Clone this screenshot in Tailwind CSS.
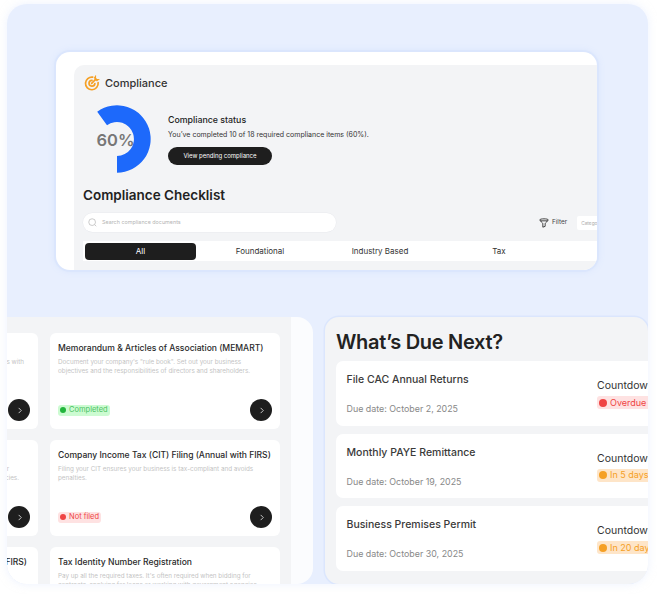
<!DOCTYPE html>
<html lang="en">
<head>
    <meta charset="UTF-8">
    <meta name="viewport" content="width=device-width, initial-scale=1.0">
    <title>Compliance</title>
    <script src="https://cdn.jsdelivr.net/npm/@tailwindcss/browser@4"></script>
</head>
<body class="bg-white [font-family:Inter,sans-serif] overflow-hidden">
    <div class="w-[657px] h-[596px] pt-[4px] pl-[7px]">
        <div class="w-[641px] h-[580px] rounded-[20px] overflow-hidden bg-[#e8effe] flex flex-col shadow-[0_0_8px_rgba(219,230,253,0.5)]">

            <!-- Top preview -->
            <div class="ml-[49px] mt-[48px] w-[541px] h-[218px] shrink-0 rounded-[14px] bg-white pt-[13px] pl-[18px] shadow-[0_0_0_2px_#dbe6fd,0_0_6px_2px_#dbe6fd] overflow-hidden">
                <div class="h-full rounded-tl-[10px] bg-[#f3f4f6] pl-[9px] pt-[8px] text-[#222]">
                    <div class="flex items-center gap-[5px] h-[20px] pl-[1px]">
                        <svg class="w-[16px] h-[16px]" viewBox="0 0 24 24" fill="none" stroke="#f5a025" stroke-width="2.6" stroke-linecap="round">
                            <path d="M13 3.2A9.5 9.5 0 1 0 21.2 11.5"/>
                            <path d="M12 8a4.4 4.4 0 1 0 4.3 5"/>
                            <path d="M11.5 12.5 18 6"/>
                            <path d="M16 4.5 17 3v4h4l-1.6 1.2" stroke-width="2.2"/>
                        </svg>
                        <span class="text-[11px] font-medium text-[#333]">Compliance</span>
                    </div>
                    <div class="flex items-center mt-[12px] h-[68px]">
                        <div class="relative w-[68px] h-[68px] shrink-0">
                            <svg class="w-[68px] h-[68px]" viewBox="0 0 68 68">
                                <path d="M34 67.7A33.7 33.7 0 1 0 14.2 6.7L24 20.2A17 17 0 1 1 34 51Z" fill="#1d69fb"/>
                            </svg>
                            <span class="absolute left-[13.5px] top-[24px] text-[16.5px] leading-[22px] font-semibold text-[#777]">60%</span>
                        </div>
                        <div class="ml-[17px]">
                            <p class="text-[8.8px] leading-[11px] font-medium">Compliance status</p>
                            <p class="text-[7px] leading-[9px] mt-[5px] whitespace-nowrap text-[#333]">You’ve completed 10 of 18 required compliance items (60%).</p>
                            <div class="mt-[8px] w-[104px] h-[18px] rounded-full bg-[#1e1e1e] text-white text-[6px] flex items-center justify-center">View pending compliance</div>
                        </div>
                    </div>
                    <h2 class="text-[13.5px] leading-[18px] font-semibold mt-[13px]">Compliance Checklist</h2>
                    <div class="flex items-center mt-[9px] h-[19px]">
                        <div class="w-[253px] h-[19px] shrink-0 rounded-full bg-white flex items-center pl-[5px] gap-[5px] shadow-[0_0_0_0.5px_#e9eaee]">
                            <svg class="w-[9px] h-[9px]" viewBox="0 0 12 12" fill="none" stroke="#aaa" stroke-width="0.8"><circle cx="5.5" cy="5.5" r="4.5"/><path d="m9 9 2 2"/></svg>
                            <span class="text-[5.4px] text-[#b5b5b5]">Search compliance documents</span>
                        </div>
                        <svg class="ml-[203px] w-[10px] h-[10px] shrink-0" viewBox="0 0 12 12" fill="none" stroke="#222" stroke-width="1"><path d="M1 2.2c0-1.6 10-1.6 10 0 0 1.4-3.4 3.3-3.6 4.6V10l-2.8 1V6.8C4.4 5.5 1 3.6 1 2.2Z"/><path d="M1.5 3.4h9"/></svg>
                        <span class="ml-[3px] text-[6.4px] text-[#444]">Filter</span>
                        <div class="ml-[10px] w-[30px] h-[14px] shrink-0 bg-white rounded-l-[2px] text-[4.8px] text-[#aaa] pl-[4px] leading-[14px] overflow-hidden">Category</div>
                    </div>
                    <div class="flex items-center mt-[9px] h-[20px] bg-white pl-[2px] text-[8px] text-[#333]">
                        <div class="w-[111px] h-[17px] rounded-[4px] bg-[#1e1e1e] text-white flex items-center justify-center">All</div>
                        <div class="w-[128px] text-center">Foundational</div>
                        <div class="w-[112px] text-center">Industry Based</div>
                        <div class="w-[126px] text-center">Tax</div>
                    </div>
                </div>
            </div>

            <!-- Bottom cards -->
            <div class="mt-[47px] flex gap-[12px] h-[267px] shrink-0">
                <div class="w-[306px] h-full shrink-0 rounded-tr-[16px] rounded-br-[16px] rounded-bl-[20px] bg-[#fbfcfe] overflow-hidden">
                    <div class="w-[284px] h-full bg-[#f3f4f6] overflow-hidden">
                        <div class="-ml-[199px] pt-[16px] grid grid-cols-[230px_230px] gap-x-[12px] gap-y-[11px] w-[472px]">

                            <div class="h-[96px] rounded-[6px] bg-white pt-[10px] px-[8px] flex flex-col">
                                <p class="h-[11px]"></p>
                                <p class="mt-[4px] text-[6.3px] leading-[9.3px] text-[#c4c4c4] text-right pr-[6px]">s with</p>
                                <div class="mt-auto mb-[8px] flex justify-end"><div class="w-[22px] h-[22px] rounded-full bg-[#1e1e1e] flex items-center justify-center"><svg class="w-[7px] h-[7px]" viewBox="0 0 8 8" fill="none" stroke="#ddd" stroke-width="1"><path d="m3 1 3 3-3 3"/></svg></div></div>
                            </div>
                            <div class="h-[96px] rounded-[6px] bg-white pt-[10px] px-[8px] flex flex-col">
                                <h3 class="text-[8.55px] leading-[11px] font-medium text-[#2a2a2a] whitespace-nowrap">Memorandum &amp; Articles of Association (MEMART)</h3>
                                <p class="mt-[4px] text-[6.3px] leading-[9.3px] text-[#c4c4c4]">Document your company's "rule book". Set out your business<br>objectives and the responsibilities of directors and shareholders.</p>
                                <div class="mt-auto mb-[8px] flex items-center justify-between">
                                    <div class="h-[11px] rounded-[3px] bg-[#ccfbd1] px-[2px] flex items-center gap-[3px] text-[7.5px] text-[#4cc264]"><span class="w-[6px] h-[6px] rounded-full bg-[#22b53c]"></span>Completed</div>
                                    <div class="w-[22px] h-[22px] rounded-full bg-[#1e1e1e] flex items-center justify-center"><svg class="w-[7px] h-[7px]" viewBox="0 0 8 8" fill="none" stroke="#ddd" stroke-width="1"><path d="m3 1 3 3-3 3"/></svg></div>
                                </div>
                            </div>

                            <div class="h-[96px] rounded-[6px] bg-white pt-[10px] px-[8px] flex flex-col">
                                <p class="h-[11px]"></p>
                                <p class="mt-[4px] text-[6.3px] leading-[9.3px] text-[#c4c4c4] text-right pr-[21px]">r</p>
                                <p class="text-[6.3px] leading-[9.3px] text-[#c4c4c4] text-right pr-[11px]">cies.</p>
                                <div class="mt-auto mb-[8px] flex justify-end"><div class="w-[22px] h-[22px] rounded-full bg-[#1e1e1e] flex items-center justify-center"><svg class="w-[7px] h-[7px]" viewBox="0 0 8 8" fill="none" stroke="#ddd" stroke-width="1"><path d="m3 1 3 3-3 3"/></svg></div></div>
                            </div>
                            <div class="h-[96px] rounded-[6px] bg-white pt-[10px] px-[8px] flex flex-col">
                                <h3 class="text-[8.55px] leading-[11px] font-medium text-[#2a2a2a] whitespace-nowrap">Company Income Tax (CIT) Filing (Annual with FIRS)</h3>
                                <p class="mt-[4px] text-[6.3px] leading-[9.3px] text-[#c4c4c4]">Filing your CIT ensures your business is tax-compliant and avoids<br>penalties.</p>
                                <div class="mt-auto mb-[8px] flex items-center justify-between">
                                    <div class="h-[11px] rounded-[3px] bg-[#fee2e2] px-[2px] flex items-center gap-[3px] text-[7.5px] text-[#ef4444]"><span class="w-[6px] h-[6px] rounded-full bg-[#ef4444]"></span>Not filed</div>
                                    <div class="w-[22px] h-[22px] rounded-full bg-[#1e1e1e] flex items-center justify-center"><svg class="w-[7px] h-[7px]" viewBox="0 0 8 8" fill="none" stroke="#ddd" stroke-width="1"><path d="m3 1 3 3-3 3"/></svg></div>
                                </div>
                            </div>

                            <div class="h-[96px] rounded-[6px] bg-white pt-[10px] px-[8px] flex flex-col">
                                <p class="text-[8.55px] leading-[11px] font-medium text-[#2a2a2a] text-right pr-[3px]">(FIRS)</p>
                                <p class="mt-[4px] text-[6.3px] leading-[9.3px] text-[#c4c4c4] text-right pr-[24px]">s</p>
                            </div>
                            <div class="h-[96px] rounded-[6px] bg-white pt-[10px] px-[8px] flex flex-col">
                                <h3 class="text-[8.55px] leading-[11px] font-medium text-[#2a2a2a] whitespace-nowrap">Tax Identity Number Registration</h3>
                                <p class="mt-[4px] text-[6.3px] leading-[9.3px] text-[#c4c4c4]">Pay up all the required taxes. It's often required when bidding for<br>contracts, applying for loans or working with government agencies.</p>
                            </div>
                        </div>
                    </div>
                </div>

                <div class="w-[323px] h-full shrink-0 rounded-[14px] bg-[#f3f4f6] pl-[11px] pt-[11px] shadow-[0_0_0_1.5px_#dbe6fd] overflow-hidden">
                    <h2 class="text-[20px] leading-[28px] font-semibold text-[#222] tracking-[-0.3px]">What’s Due Next?</h2>
                    <div class="mt-[5px] flex flex-col gap-[8px]">
                        <div class="h-[64.5px] rounded-l-[7px] bg-white flex pl-[10.5px]">
                            <div class="w-[250.5px] shrink-0 pt-[12px]">
                                <p class="text-[10.5px] leading-[14px] font-medium text-[#3a3a3a]">File CAC Annual Returns</p>
                                <p class="mt-[15px] text-[8.9px] leading-[13px] text-[#888]">Due date: October 2, 2025</p>
                            </div>
                            <div class="pt-[18px] whitespace-nowrap">
                                <p class="text-[10.5px] leading-[14px] text-[#333]">Countdown</p>
                                <div class="mt-[3px] h-[13px] rounded-l-[3px] bg-[#fee2e2] pl-[2px] flex items-center gap-[3px] text-[9px] text-[#ef4444]"><span class="w-[8px] h-[8px] rounded-full bg-[#ef4444]"></span>Overdue</div>
                            </div>
                        </div>
                        <div class="h-[64.5px] rounded-l-[7px] bg-white flex pl-[10.5px]">
                            <div class="w-[250.5px] shrink-0 pt-[12px]">
                                <p class="text-[10.5px] leading-[14px] font-medium text-[#3a3a3a]">Monthly PAYE Remittance</p>
                                <p class="mt-[15px] text-[8.9px] leading-[13px] text-[#888]">Due date: October 19, 2025</p>
                            </div>
                            <div class="pt-[18px] whitespace-nowrap">
                                <p class="text-[10.5px] leading-[14px] text-[#333]">Countdown</p>
                                <div class="mt-[3px] h-[13px] rounded-l-[3px] bg-[#fee5c8] pl-[2px] flex items-center gap-[3px] text-[9px] text-[#f5a025]"><span class="w-[8px] h-[8px] rounded-full bg-[#f5a025]"></span>In 5 days</div>
                            </div>
                        </div>
                        <div class="h-[64.5px] rounded-l-[7px] bg-white flex pl-[10.5px]">
                            <div class="w-[250.5px] shrink-0 pt-[12px]">
                                <p class="text-[10.5px] leading-[14px] font-medium text-[#3a3a3a]">Business Premises Permit</p>
                                <p class="mt-[15px] text-[8.9px] leading-[13px] text-[#888]">Due date: October 30, 2025</p>
                            </div>
                            <div class="pt-[18px] whitespace-nowrap">
                                <p class="text-[10.5px] leading-[14px] text-[#333]">Countdown</p>
                                <div class="mt-[3px] h-[13px] rounded-l-[3px] bg-[#fee5c8] pl-[2px] flex items-center gap-[3px] text-[9px] text-[#f5a025]"><span class="w-[8px] h-[8px] rounded-full bg-[#f5a025]"></span>In 20 days</div>
                            </div>
                        </div>
                    </div>
                </div>
            </div>
        </div>
    </div>
</body>
</html>
